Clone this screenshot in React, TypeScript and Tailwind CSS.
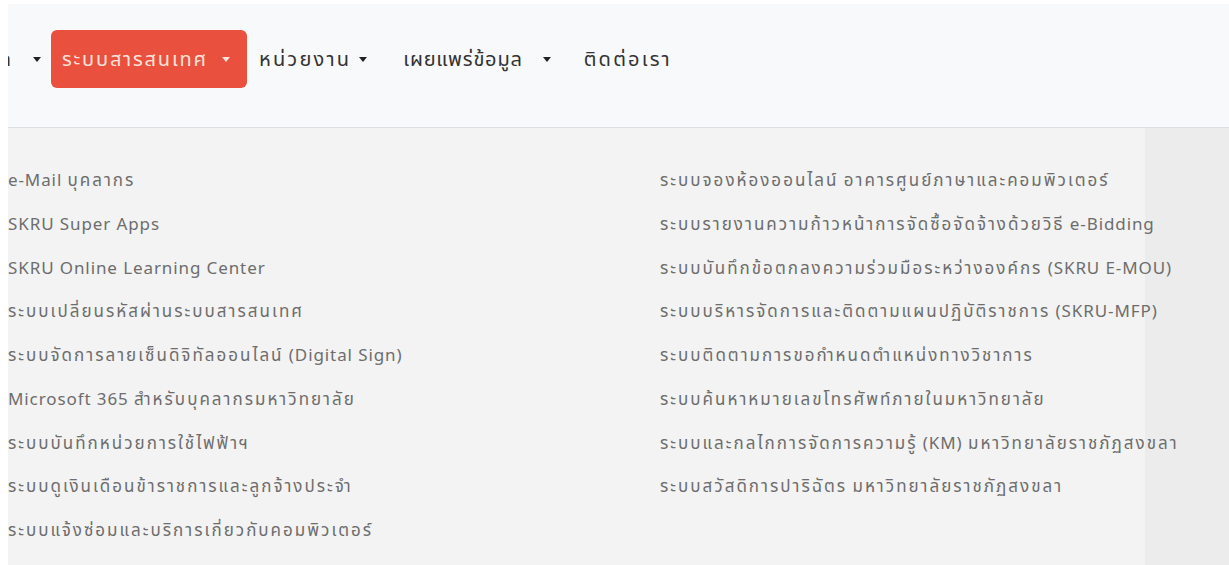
import React from "react";

const leftLinks = [
  "e-Mail บุคลากร",
  "SKRU Super Apps",
  "SKRU Online Learning Center",
  "ระบบเปลี่ยนรหัสผ่านระบบสารสนเทศ",
  "ระบบจัดการลายเซ็นดิจิทัลออนไลน์ (Digital Sign)",
  "Microsoft 365 สำหรับบุคลากรมหาวิทยาลัย",
  "ระบบบันทึกหน่วยการใช้ไฟฟ้าฯ",
  "ระบบดูเงินเดือนข้าราชการและลูกจ้างประจำ",
  "ระบบแจ้งซ่อมและบริการเกี่ยวกับคอมพิวเตอร์",
];

const rightLinks = [
  "ระบบจองห้องออนไลน์ อาคารศูนย์ภาษาและคอมพิวเตอร์",
  "ระบบรายงานความก้าวหน้าการจัดซื้อจัดจ้างด้วยวิธี e-Bidding",
  "ระบบบันทึกข้อตกลงความร่วมมือระหว่างองค์กร (SKRU E-MOU)",
  "ระบบบริหารจัดการและติดตามแผนปฏิบัติราชการ (SKRU-MFP)",
  "ระบบติดตามการขอกำหนดตำแหน่งทางวิชาการ",
  "ระบบค้นหาหมายเลขโทรศัพท์ภายในมหาวิทยาลัย",
  "ระบบและกลไกการจัดการความรู้ (KM) มหาวิทยาลัยราชภัฏสงขลา",
  "ระบบสวัสดิการปาริฉัตร มหาวิทยาลัยราชภัฏสงขลา",
];

function Spaced({ text, thai, latin }: { text: string; thai: string; latin: string }) {
  return (
    <>
      {text.split(/([\u0E00-\u0E7F]+)/).map((part, i) =>
        part ? (
          <span key={i} className={/[\u0E00-\u0E7F]/.test(part) ? thai : latin}>
            {part}
          </span>
        ) : null
      )}
    </>
  );
}

function Caret({ className = "" }: { className?: string }) {
  return (
    <svg viewBox="0 0 8 5" className={`h-[5px] w-[8px] shrink-0 ${className}`} aria-hidden="true">
      <path d="M0 0h8L4 5z" fill="currentColor" />
    </svg>
  );
}

type NavItemProps = {
  label: string;
  caret?: boolean;
  className?: string;
  caretClass?: string;
  textClass?: string;
};

function NavItem({ label, caret = true, className = "", caretClass = "ml-[8px]", textClass = "tracking-[1.8px]" }: NavItemProps) {
  return (
    <a href="#" className={`flex items-center text-[20px] text-[#333] ${className}`}>
      <span className={textClass}>{label}</span>
      {caret ? <Caret className={`text-[#222] ${caretClass}`} /> : null}
    </a>
  );
}

function LinkColumn({ links }: { links: string[] }) {
  return (
    <ul className="flex flex-col">
      {links.map((link) => (
        <li key={link} className="flex h-[43.75px] items-center whitespace-nowrap text-[17px] text-[#6d6d6d]">
          <a href="#">
            <Spaced text={link} thai="tracking-[2px]" latin="tracking-[0.9px]" />
          </a>
        </li>
      ))}
    </ul>
  );
}

export default function App() {
  return (
    <div
      className="flex h-[565px] w-[1229px] flex-col overflow-hidden bg-white pl-2 pt-1"
      style={{ fontFamily: '"Noto Sans", "Noto Sans Thai", Tahoma, sans-serif' }}
    >
      <nav className="flex h-[124px] shrink-0 items-start border-b border-[#dcdfe2] bg-[#f8f9fa] pt-[26px]">
        <div className="flex h-[58px] items-center">
          <span className="flex w-[3px] justify-end overflow-hidden text-[20px] text-[#333]">ก</span>
          <Caret className="ml-[22px] text-[#222]" />
        </div>
        <button className="ml-[10px] flex h-[58px] items-center rounded-md bg-[#e9503e] pl-[11px] pr-[17px] text-[20px] text-[#fde3dc]">
          <span className="tracking-[1.8px]">ระบบสารสนเทศ</span>
          <Caret className="ml-[14px] text-[#fde3dc]" />
        </button>
        <div className="flex h-[58px] items-center">
          <NavItem label="หน่วยงาน" className="ml-[12px]" textClass="tracking-[2.2px]" />
          <NavItem label="เผยแพร่ข้อมูล" className="ml-[36px]" textClass="tracking-[0.8px]" caretClass="ml-[20px]" />
          <NavItem label="ติดต่อเรา" caret={false} className="ml-[33px]" textClass="tracking-[2.2px]" />
        </div>
      </nav>

      {/* dropdown panel: lighter sheet with a darker band on the far right */}
      <div className="grid min-h-0 flex-1 grid-cols-[652px_minmax(0,1fr)] bg-[linear-gradient(to_right,#f3f3f3_1137px,#ececec_1137px)] pt-[30px]">
        <LinkColumn links={leftLinks} />
        <LinkColumn links={rightLinks} />
      </div>
    </div>
  );
}
